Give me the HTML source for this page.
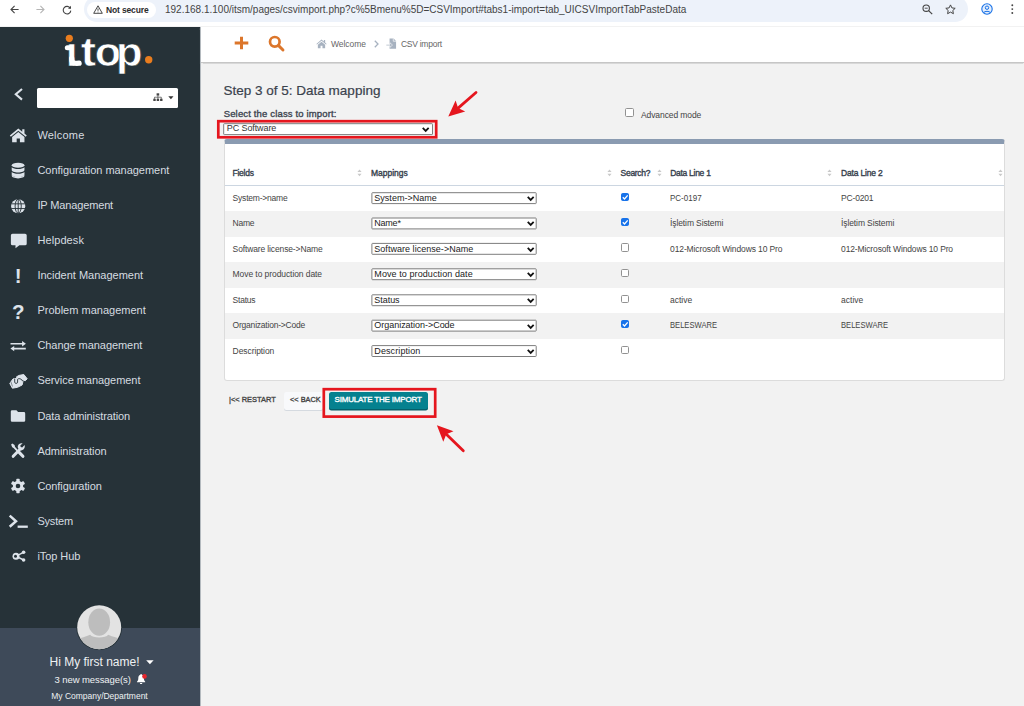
<!DOCTYPE html>
<html><head><meta charset="utf-8">
<style>
*{box-sizing:border-box;margin:0;padding:0}
html,body{width:1024px;height:706px;overflow:hidden;background:#f2f2f2;font-family:"Liberation Sans",sans-serif;}
.a{position:absolute;white-space:nowrap;font-family:"Liberation Sans",sans-serif}
.b{position:absolute}
#chrome{position:absolute;left:0;top:0;width:1024px;height:26px;background:#fff;}
#urlbar{position:absolute;left:84px;top:-4px;width:884px;height:25.5px;background:#edf2fa;border-radius:13px;}
#chip{position:absolute;left:87px;top:1.5px;width:68.5px;height:16px;background:#fff;border-radius:8px;}
#side{position:absolute;left:0;top:26.5px;width:200px;height:680px;background:#263238;}
#sidefoot{position:absolute;left:0;top:628px;width:200px;height:78px;background:#3e4a59;}
#topbar{position:absolute;left:200px;top:27px;width:824px;height:36px;background:#fff;border-bottom:1px solid #c6c6c6;box-shadow:0 0.5px 0.8px #d8d8d8}
#main{position:absolute;left:200px;top:63.5px;width:824px;height:644px;background:#f2f2f2;}
#edge{position:absolute;left:200px;top:26.5px;width:1px;height:680px;background:#b4babf}
#panel{position:absolute;left:223.5px;top:139.3px;width:781.5px;height:241.6px;background:#fff;border:1px solid #dcdcdc;border-top:5px solid #8a9bb1;border-radius:3px 3px 3px 3px;}
.row{position:absolute;left:224.7px;width:779px;background:#f2f2f2}
.sel{position:absolute;background:#fff;border:1px solid #808080;border-radius:1.5px}
.cb{position:absolute;width:8.4px;height:8.4px;border:1px solid #929292;border-radius:1.6px;background:#fff}
.cb.on{background:#1873ea;border-color:#1873ea}
svg{position:absolute;overflow:visible}
</style></head><body>
<div id="chrome">
  <div id="urlbar"></div><div id="chip"></div>
  <!-- back -->
  <svg style="left:10px;top:5px" width="9" height="9" viewBox="0 0 9 9"><path d="M8.6 4.5H1.2M4.6 0.9L1 4.5l3.6 3.6" fill="none" stroke="#444" stroke-width="1.1"/></svg>
  <svg style="left:36px;top:5px" width="9" height="9" viewBox="0 0 9 9"><path d="M0.4 4.5H7.8M4.4 0.9L8 4.5 4.4 8.1" fill="none" stroke="#b5b5b5" stroke-width="1.1"/></svg>
  <svg style="left:62px;top:4.5px" width="10" height="10" viewBox="0 0 10 10"><path d="M8.3 3.2A3.8 3.8 0 1 0 8.8 5.6" fill="none" stroke="#444" stroke-width="1.1"/><path d="M9 0.8v3H6z" fill="#444"/></svg>
  <!-- warning -->
  <svg style="left:93px;top:5px" width="10" height="9" viewBox="0 0 10 9"><path d="M5 0.8L9.3 8.3H0.7z" fill="none" stroke="#333" stroke-width="0.9" stroke-linejoin="round"/><path d="M5 3.4v2.4M5 6.6v0.8" stroke="#333" stroke-width="0.9"/></svg>
  <!-- zoom -->
  <svg style="left:921.5px;top:4px" width="11" height="11" viewBox="0 0 11 11"><circle cx="4.2" cy="4.2" r="3.2" fill="none" stroke="#444" stroke-width="1.1"/><path d="M6.6 6.6L10.2 10.2" stroke="#444" stroke-width="1.2"/><path d="M2.7 4.2h3" stroke="#444" stroke-width="0.9"/></svg>
  <!-- star -->
  <svg style="left:945px;top:4px" width="11" height="10.500" viewBox="0 0 11 10.5"><path d="M5.500 0.9L6.9 3.9 10.2 4.3 7.8 6.500 8.4 9.700 5.500 8.100 2.600 9.700 3.200 6.500 0.800 4.300 4.100 3.900z" fill="none" stroke="#444" stroke-width="1" stroke-linejoin="round"/></svg>
  <!-- profile -->
  <svg style="left:980.6px;top:3px" width="12" height="12" viewBox="0 0 12 12"><circle cx="6" cy="6" r="5.2" fill="#e4eefc" stroke="#1a73e8" stroke-width="1.1"/><circle cx="6" cy="4.700" r="1.7" fill="none" stroke="#1a73e8" stroke-width="1"/><path d="M2.700 9.600C3.400 7.900 8.600 7.900 9.300 9.600" fill="none" stroke="#1a73e8" stroke-width="1"/></svg>
  <svg style="left:1011px;top:4.3px" width="3" height="11" viewBox="0 0 3 11"><circle cx="1.3" cy="1.2" r="0.95" fill="#444"/><circle cx="1.3" cy="5.1" r="0.95" fill="#444"/><circle cx="1.3" cy="9" r="0.95" fill="#444"/></svg>
</div>
<div id="side"></div>
<div id="sidefoot"></div>
<div id="topbar"></div>
<div id="main"></div>
<div id="edge"></div>
<!-- logo -->
<svg style="left:0;top:0" width="200" height="90" viewBox="0 0 200 90">
  <g font-family="Liberation Sans, sans-serif" font-weight="bold" font-size="41" fill="#fff" stroke="#263238" stroke-width="0.6" stroke-linejoin="round" text-anchor="middle">
  <text transform="translate(71.6,66.2) scale(1.04,1)" x="0" y="0">ı</text>
  <text transform="translate(88.4,66.2) scale(1.12,1)" x="0" y="0">t</text>
  <text transform="translate(108,66.2) scale(1.06,1)" x="0" y="0">o</text>
  <text transform="translate(129.4,66.2) scale(1.06,1)" x="0" y="0">p</text>
  </g>
  <path d="M71.7 58.500c0 4.200 2 5.300 7.400 4.700" fill="none" stroke="#fff" stroke-width="5.3" stroke-linecap="round"/>
  <path d="M67.3 47.700h3" fill="none" stroke="#fff" stroke-width="5" stroke-linecap="round"/>
  <circle cx="69.3" cy="38.3" r="3.6" fill="#ea7d1e"/>
  <circle cx="148.7" cy="59.8" r="3.7" fill="#ea7d1e"/>
</svg>
<!-- collapse chevron -->
<svg style="left:14px;top:88px" width="10" height="13" viewBox="0 0 10 13"><path d="M8 1L1.800 6.300 8 11.600" fill="none" stroke="#dde3ea" stroke-width="2.100"/></svg>
<!-- search box -->
<div class="b" style="left:37px;top:88.400px;width:140.800px;height:19.200px;background:#fff;border-radius:1.500px"></div>
<svg style="left:152.500px;top:92.500px" width="10" height="9" viewBox="0 0 10 9"><g fill="#444"><rect x="3.600" y="0.300" width="2.600" height="2.300"/><rect x="0.300" y="5.700" width="2.400" height="2.300"/><rect x="3.700" y="5.700" width="2.400" height="2.300"/><rect x="7.100" y="5.700" width="2.400" height="2.300"/></g><path d="M4.900 2.500v3.300M1.500 5.800V4.200H8.300V5.800" fill="none" stroke="#444" stroke-width="0.700"/></svg>
<svg style="left:167.500px;top:95.500px" width="6" height="4" viewBox="0 0 6 4"><path d="M0.300 0.300H5.500L2.900 3.300z" fill="#333"/></svg>
<!-- menu icons : each 16x16 box at left 10, top cy-8 -->
<!-- home 135 -->
<svg style="left:9px;top:125.800px" width="18.600" height="18.200" viewBox="0 0 16 16" preserveAspectRatio="none"><path d="M8 2.300L0.700 8.400l0.900 1L8 4.100l6.400 5.300 0.900-1L13.300 6.700V2.900h-1.900v2.200z" fill="#dde3ea"/><path d="M8 5.200L2.700 9.600v4.800h3.900v-3.300h2.800v3.300h3.900V9.600z" fill="#dde3ea"/></svg>
<!-- database 170.3 -->
<svg style="left:10.200px;top:162.400px" width="16.200" height="17.600" viewBox="0 0 16 16" preserveAspectRatio="none"><g fill="#dde3ea"><ellipse cx="8" cy="3" rx="6.300" ry="2.300"/><path d="M1.700 4.700v2.600c0 1.300 2.800 2.300 6.300 2.300s6.300-1 6.300-2.300V4.700c-1.200 1-3.600 1.600-6.300 1.600S2.900 5.700 1.700 4.700z"/><path d="M1.700 9v2.600c0 1.300 2.800 2.300 6.300 2.300s6.300-1 6.300-2.300V9c-1.200 1-3.600 1.600-6.300 1.600S2.900 10 1.700 9z"/></g><path d="M1.700 13.300v0.500c0 1.300 2.800 2.300 6.300 2.300s6.300-1 6.300-2.300v-0.500c-1.200 1-3.600 1.600-6.300 1.600s-5.100-0.600-6.300-1.600z" fill="#dde3ea" transform="translate(0,-1.200)"/></svg>
<!-- globe 205.4 -->
<svg style="left:10.100px;top:197.700px" width="16.400" height="16.400" viewBox="0 0 16 16"><circle cx="8" cy="8" r="6.900" fill="#dde3ea"/><g fill="none" stroke="#263238" stroke-width="0.9"><ellipse cx="8" cy="8" rx="3" ry="6.900"/><path d="M1.100 5.700h13.800M1.100 10.300h13.800M8 1.100v13.800"/></g></svg>
<!-- comment 240.5 -->
<svg style="left:9.600px;top:231.900px" width="17.600" height="17.400" viewBox="0 0 16 16" preserveAspectRatio="none"><path d="M2.300 1.600h11.400a1.500 1.500 0 0 1 1.500 1.500v7.600a1.500 1.500 0 0 1-1.500 1.500H8.500L5 14.900v-2.700H2.300a1.500 1.500 0 0 1-1.500-1.500V3.100a1.500 1.500 0 0 1 1.500-1.500z" fill="#dde3ea"/></svg>
<!-- exclamation 275.5 -->
<div class="a" style="left:8px;top:264px;width:20.400px;text-align:center;font-size:20.500px;line-height:23px;font-weight:bold;color:#dde3ea">!</div>
<!-- question 310.7 -->
<div class="a" style="left:8px;top:300px;width:20.600px;text-align:center;font-size:20.500px;line-height:23px;font-weight:bold;color:#dde3ea">?</div>
<!-- exchange 345.7 -->
<svg style="left:0;top:0" width="40" height="400" viewBox="0 0 40 400"><g fill="#dde3ea"><path d="M10.500 343h11.600v-1.900l3.800 2.700-3.800 2.700v-1.900H10.500z"/><path d="M25.800 347.800H14.200v-1.900l-3.800 2.700 3.800 2.700v-1.900h11.600z"/></g></svg>
<!-- handshake 380.9 -->
<svg style="left:0;top:0" width="40" height="400" viewBox="0 0 40 400"><g fill="#dde3ea" stroke="#dde3ea" stroke-width="1" stroke-linejoin="round"><path d="M9.800 383.400L13 378.900 18.200 378.100 23 381.200 22.100 385 17.500 387.300 12.400 388.200z"/><path d="M16.200 377.200L18.600 375.500 23.800 374.500 27.200 378.800 25.200 380.800 21.700 379.400z"/></g><path d="M14.700 378.600V382.200c0 1.600 2.900 1.600 2.900 0V379.300c0.800-0.900 2.300-0.900 3.400 0l1.900 1.700" fill="none" stroke="#263238" stroke-width="0.900"/><path d="M10.900 381.900l1.600 4.600" stroke="#263238" stroke-width="0.500" fill="none"/></svg>
<!-- folder 416 -->
<svg style="left:10.200px;top:408.200px" width="16" height="16" viewBox="0 0 16 16"><path d="M2.100 2.300h4.300l1.700 1.800h5.800a1.300 1.300 0 0 1 1.300 1.300v7.100a1.300 1.300 0 0 1-1.300 1.300H2.100a1.300 1.300 0 0 1-1.300-1.300V3.600a1.300 1.300 0 0 1 1.300-1.300z" fill="#dde3ea"/></svg>
<!-- tools 451.2 -->
<svg style="left:10px;top:443.200px" width="16" height="16" viewBox="0 0 16 16"><g stroke="#dde3ea" fill="none" stroke-linecap="round"><path d="M3.200 13.300L9.300 7" stroke-width="3"/><path d="M6.800 7.200L3 3.200" stroke-width="1.800"/><path d="M9.400 9.600l3.500 3.700" stroke-width="3.100"/></g><path d="M1.100 1.600l1.200-1 2.300 1.500 0.300 1.600-1.200 1-1.500-0.500z" fill="#dde3ea"/><path d="M14.600 2.100l-2.400 2.300-1.500-0.400-0.400-1.500L12.700 0.300C11.200-0.100 9.700 0.300 8.800 1.300c-1 1.100-1.300 2.500-0.800 3.900l1.700 1.900c1.400 0.600 2.900 0.300 4-0.800 1-1 1.400-2.600 0.900-4.200z" fill="#dde3ea"/></svg>
<!-- cog 486.300 -->
<svg style="left:10px;top:478.300px" width="16" height="16" viewBox="0 0 16 16"><g transform="translate(8,8)"><circle r="5.200" fill="#dde3ea"/><g fill="#dde3ea"><rect x="-1.700" y="-7.200" width="3.400" height="14.400" rx="0.700"/><rect x="-1.700" y="-7.200" width="3.400" height="14.400" rx="0.700" transform="rotate(60)"/><rect x="-1.700" y="-7.200" width="3.400" height="14.400" rx="0.700" transform="rotate(120)"/></g><circle r="2.300" fill="#263238"/></g></svg>
<!-- terminal 521.4 -->
<svg style="left:8px;top:513.400px" width="20" height="16" viewBox="0 0 20 16"><path d="M1.700 2.600L8 8.200 1.700 13.800" fill="none" stroke="#dde3ea" stroke-width="2.500" stroke-linejoin="miter"/><path d="M9.600 13.700h10.200" stroke="#dde3ea" stroke-width="2.300"/></svg>
<!-- hub 556.6 -->
<svg style="left:10.500px;top:547.600px" width="16" height="16" viewBox="0 0 16 16"><g fill="#dde3ea"><circle cx="5" cy="8.200" r="3.500"/><circle cx="12.600" cy="4.300" r="1.800"/><circle cx="12.600" cy="12" r="1.800"/></g><path d="M5 8.200L12.600 4.300M5 8.200l7.600 3.800" stroke="#dde3ea" stroke-width="1.400" fill="none"/><circle cx="4.500" cy="8.200" r="1.500" fill="#263238"/></svg>
<!-- avatar -->
<svg style="left:76.300px;top:604px" width="46.400" height="46.400" viewBox="0 0 46 46"><defs><clipPath id="av"><circle cx="23" cy="23" r="21.800"/></clipPath></defs><circle cx="23" cy="23" r="22.700" fill="#263238"/><circle cx="23" cy="23" r="21.800" fill="#e3e3e3"/><g clip-path="url(#av)" fill="#bdbdbd"><ellipse cx="23" cy="18" rx="10.800" ry="13.600"/><path d="M-2 46V39c0-5 10-5.500 16-8.500 2.500 3.500 15.500 3.500 18 0 6 3 16 3.500 16 8.500v7z"/></g></svg>
<!-- caret -->
<svg style="left:146px;top:659.800px" width="8" height="5" viewBox="0 0 8 5"><path d="M0.200 0.300H7.600L3.900 4.300z" fill="#fff"/></svg>
<!-- bell -->
<svg style="left:135.500px;top:673.500px" width="11" height="11" viewBox="0 0 11 11"><path d="M4.300 0.800a0.800 0.800 0 0 1 1.600 0C7.300 1.300 7.900 2.700 7.900 4.300c0 2 0.600 2.700 1.300 3.400v0.600H1v-0.600C1.700 7 2.300 6.300 2.300 4.300 2.300 2.700 2.900 1.300 4.300 0.800z" fill="#fff"/><path d="M3.900 8.900h2.400a1.200 1.200 0 0 1-2.400 0z" fill="#fff"/><circle cx="8.500" cy="2.400" r="2.300" fill="#e8262d"/></svg>

<svg style="left:233.600px;top:36.300px" width="15" height="14" viewBox="0 0 15 14"><path d="M7.500 0.700v12.600M0.700 7h13.600" stroke="#dc762b" stroke-width="3" fill="none"/></svg>
<svg style="left:267.700px;top:34.600px" width="17" height="17" viewBox="0 0 17 17"><circle cx="6.800" cy="6.800" r="4.800" fill="none" stroke="#dc762b" stroke-width="2.700"/><path d="M10.600 10.600L15 15" stroke="#dc762b" stroke-width="2.900" stroke-linecap="round"/></svg>
<svg style="left:315.500px;top:38.800px" width="11" height="10" viewBox="0 0 16 14.500"><path d="M8 0.800L0.500 7.100l0.900 1L8 2.600l6.600 5.500 0.900-1L13.300 5.200V1.400h-1.900v2.200z" fill="#a7b2c0"/><path d="M8 3.800L2.700 8.200v5.300h3.900v-3.600h2.800v3.600h3.900V8.200z" fill="#a7b2c0"/></svg>
<svg style="left:374.300px;top:39.800px" width="5" height="8" viewBox="0 0 5 8"><path d="M0.800 0.700L4 4 0.800 7.300" fill="none" stroke="#a7b2c0" stroke-width="1.300"/></svg>
<svg style="left:386.300px;top:38.200px" width="11.200" height="11.200" viewBox="0 0 10 10"><path d="M3.200 0.400h3.600L9 2.600v7H3.200z" fill="#a7b2c0"/><path d="M6.500 0.400v2.500H9" fill="none" stroke="#fff" stroke-width="0.600"/><path d="M0.200 5.700h3.400V4.300l2.200 2-2.200 2V6.900H0.200z" fill="#a7b2c0" stroke="#fff" stroke-width="0.500"/></svg>
<div class="cb" style="left:624.800px;top:107.800px;width:9px;height:9px"></div>
<div id="panel"></div>
<div class="b" style="left:224.700px;top:185px;width:779px;height:1px;background:#ccd6e1"></div>
<div class="row" style="top:211.0px;height:26.0px"></div>
<div class="row" style="top:262.0px;height:26.0px"></div>
<div class="row" style="top:313.0px;height:26.0px"></div>
<svg style="left:0;top:0" width="1024" height="706"><rect x="223.7" y="123.7" width="208.8" height="10.9" rx="0.6" fill="#fff" stroke="#7d7d7d" stroke-width="1"/></svg>
<svg style="left:421.900px;top:126.700px" width="7.4" height="5.6" viewBox="0 0 8 6"><path d="M0.800 0.900L4 4.200 7.200 0.900" fill="none" stroke="#111" stroke-width="1.900"/></svg>
<svg style="left:0;top:0" width="1024" height="706"><rect x="218.3" y="121.2" width="217.9" height="16.1" fill="none" stroke="#e5161e" stroke-width="2.7"/></svg>
<svg style="left:0;top:0" width="1024" height="706"><rect x="371.9" y="192.70" width="164.3" height="10.9" rx="0.6" fill="#fff" stroke="#7d7d7d" stroke-width="1"/></svg>
<svg style="left:526.600px;top:196.0px" width="7.4" height="5.6" viewBox="0 0 8 6"><path d="M0.800 0.900L4 4.200 7.200 0.900" fill="none" stroke="#111" stroke-width="1.900"/></svg>
<div class="cb on" style="left:621px;top:192.6px"></div>
<svg style="left:621px;top:192.6px" width="8.400" height="8.400" viewBox="0 0 8.400 8.400"><path d="M1.800 4.300L3.500 6 6.700 2.400" fill="none" stroke="#fff" stroke-width="1.300"/></svg>
<svg style="left:0;top:0" width="1024" height="706"><rect x="371.9" y="218.00" width="164.3" height="10.9" rx="0.6" fill="#fff" stroke="#7d7d7d" stroke-width="1"/></svg>
<svg style="left:526.600px;top:221.3px" width="7.4" height="5.6" viewBox="0 0 8 6"><path d="M0.800 0.900L4 4.200 7.200 0.900" fill="none" stroke="#111" stroke-width="1.900"/></svg>
<div class="cb on" style="left:621px;top:217.9px"></div>
<svg style="left:621px;top:217.9px" width="8.400" height="8.400" viewBox="0 0 8.400 8.400"><path d="M1.800 4.300L3.500 6 6.700 2.400" fill="none" stroke="#fff" stroke-width="1.300"/></svg>
<svg style="left:0;top:0" width="1024" height="706"><rect x="371.9" y="243.40" width="164.3" height="10.9" rx="0.6" fill="#fff" stroke="#7d7d7d" stroke-width="1"/></svg>
<svg style="left:526.600px;top:246.7px" width="7.4" height="5.6" viewBox="0 0 8 6"><path d="M0.800 0.900L4 4.200 7.200 0.900" fill="none" stroke="#111" stroke-width="1.900"/></svg>
<div class="cb" style="left:621px;top:243.3px"></div>
<svg style="left:0;top:0" width="1024" height="706"><rect x="371.9" y="268.80" width="164.3" height="10.9" rx="0.6" fill="#fff" stroke="#7d7d7d" stroke-width="1"/></svg>
<svg style="left:526.600px;top:272.1px" width="7.4" height="5.6" viewBox="0 0 8 6"><path d="M0.800 0.900L4 4.200 7.200 0.900" fill="none" stroke="#111" stroke-width="1.900"/></svg>
<div class="cb" style="left:621px;top:268.7px"></div>
<svg style="left:0;top:0" width="1024" height="706"><rect x="371.9" y="294.80" width="164.3" height="10.9" rx="0.6" fill="#fff" stroke="#7d7d7d" stroke-width="1"/></svg>
<svg style="left:526.600px;top:298.1px" width="7.4" height="5.6" viewBox="0 0 8 6"><path d="M0.800 0.900L4 4.200 7.200 0.900" fill="none" stroke="#111" stroke-width="1.900"/></svg>
<div class="cb" style="left:621px;top:294.7px"></div>
<svg style="left:0;top:0" width="1024" height="706"><rect x="371.9" y="320.20" width="164.3" height="10.9" rx="0.6" fill="#fff" stroke="#7d7d7d" stroke-width="1"/></svg>
<svg style="left:526.600px;top:323.5px" width="7.4" height="5.6" viewBox="0 0 8 6"><path d="M0.800 0.900L4 4.200 7.200 0.900" fill="none" stroke="#111" stroke-width="1.900"/></svg>
<div class="cb on" style="left:621px;top:320.1px"></div>
<svg style="left:621px;top:320.1px" width="8.400" height="8.400" viewBox="0 0 8.400 8.400"><path d="M1.800 4.300L3.500 6 6.700 2.400" fill="none" stroke="#fff" stroke-width="1.300"/></svg>
<svg style="left:0;top:0" width="1024" height="706"><rect x="371.9" y="345.60" width="164.3" height="10.9" rx="0.6" fill="#fff" stroke="#7d7d7d" stroke-width="1"/></svg>
<svg style="left:526.600px;top:348.9px" width="7.4" height="5.6" viewBox="0 0 8 6"><path d="M0.800 0.900L4 4.200 7.200 0.900" fill="none" stroke="#111" stroke-width="1.900"/></svg>
<div class="cb" style="left:621px;top:345.5px"></div>
<svg style="left:356.8px;top:168.800px" width="5" height="8" viewBox="0 0 5 8"><path d="M0.400 3.100L2.500 0.500 4.600 3.100zM0.400 4.700L2.500 7.300 4.600 4.700z" fill="#c9c9c9"/></svg>
<svg style="left:606.5px;top:168.800px" width="5" height="8" viewBox="0 0 5 8"><path d="M0.400 3.100L2.500 0.500 4.600 3.100zM0.400 4.700L2.500 7.300 4.600 4.700z" fill="#c9c9c9"/></svg>
<svg style="left:656.5px;top:168.800px" width="5" height="8" viewBox="0 0 5 8"><path d="M0.400 3.100L2.500 0.500 4.600 3.100zM0.400 4.700L2.500 7.300 4.600 4.700z" fill="#c9c9c9"/></svg>
<svg style="left:827.0px;top:168.800px" width="5" height="8" viewBox="0 0 5 8"><path d="M0.400 3.100L2.500 0.500 4.600 3.100zM0.400 4.700L2.500 7.300 4.600 4.700z" fill="#c9c9c9"/></svg>
<svg style="left:997.5px;top:168.800px" width="5" height="8" viewBox="0 0 5 8"><path d="M0.400 3.100L2.500 0.500 4.600 3.100zM0.400 4.700L2.500 7.300 4.600 4.700z" fill="#c9c9c9"/></svg>
<div class="b" style="left:283.900px;top:392px;width:39px;height:17.6px;background:#f8f9fb;border-radius:2.500px;box-shadow:0 1px 0 #d5dae0"></div>
<div class="b" style="left:329px;top:392px;width:98.500px;height:17.4px;background:#05818f;border-radius:2.500px;box-shadow:0 1.500px 0 #055f69"></div>
<svg style="left:0;top:0" width="1024" height="706"><rect x="323.8" y="389.2" width="111.4" height="27.4" fill="none" stroke="#e5161e" stroke-width="2.7"/></svg>
<svg style="left:0;top:0" width="1024" height="706"><path d="M476.0 92.5L458.1 108.1" stroke="#e5161e" stroke-width="2.8" stroke-linecap="round"/><path d="M448.3 116.6L455.6 100.6L458.1 108.1L465.2 111.6z" fill="#e5161e"/></svg>
<svg style="left:0;top:0" width="1024" height="706"><path d="M463.3 450.8L446.3 434.3" stroke="#e5161e" stroke-width="2.8" stroke-linecap="round"/><path d="M436.9 425.3L453.5 431.2L446.3 434.3L443.3 441.7z" fill="#e5161e"/></svg>
<div class="a" style="left:37.4px;top:128.5px;font-size:11px;line-height:13px;color:#d6dce0;letter-spacing:0.207px;">Welcome</div>
<div class="a" style="left:37.4px;top:163.8px;font-size:11px;line-height:13px;color:#d6dce0;letter-spacing:-0.035px;">Configuration management</div>
<div class="a" style="left:37.4px;top:198.9px;font-size:11px;line-height:13px;color:#d6dce0;letter-spacing:-0.139px;">IP Management</div>
<div class="a" style="left:37.4px;top:234.0px;font-size:11px;line-height:13px;color:#d6dce0;letter-spacing:0.092px;">Helpdesk</div>
<div class="a" style="left:37.4px;top:269.0px;font-size:11px;line-height:13px;color:#d6dce0;letter-spacing:-0.005px;">Incident Management</div>
<div class="a" style="left:37.4px;top:304.2px;font-size:11px;line-height:13px;color:#d6dce0;letter-spacing:0.010px;">Problem management</div>
<div class="a" style="left:37.4px;top:339.2px;font-size:11px;line-height:13px;color:#d6dce0;letter-spacing:-0.056px;">Change management</div>
<div class="a" style="left:37.4px;top:374.4px;font-size:11px;line-height:13px;color:#d6dce0;letter-spacing:-0.050px;">Service management</div>
<div class="a" style="left:37.4px;top:409.5px;font-size:11px;line-height:13px;color:#d6dce0;letter-spacing:-0.110px;">Data administration</div>
<div class="a" style="left:37.4px;top:444.7px;font-size:11px;line-height:13px;color:#d6dce0;letter-spacing:-0.031px;">Administration</div>
<div class="a" style="left:37.4px;top:479.8px;font-size:11px;line-height:13px;color:#d6dce0;letter-spacing:-0.078px;">Configuration</div>
<div class="a" style="left:37.4px;top:514.9px;font-size:11px;line-height:13px;color:#d6dce0;letter-spacing:-0.177px;">System</div>
<div class="a" style="left:37.4px;top:550.1px;font-size:11px;line-height:13px;color:#d6dce0;letter-spacing:-0.060px;">iTop Hub</div>
<div class="a" style="left:49.5px;top:654.8px;font-size:12px;line-height:14px;color:#eef1f3;letter-spacing:-0.001px;">Hi My first name!</div>
<div class="a" style="left:54.5px;top:674.1px;font-size:9.5px;line-height:11px;color:#eef1f3;letter-spacing:-0.082px;">3 new message(s)</div>
<div class="a" style="left:51.3px;top:690.6px;font-size:8.5px;line-height:10px;color:#eef1f3;letter-spacing:-0.022px;">My Company/Department</div>
<div class="a" style="left:105.9px;top:4.9px;font-size:8.5px;line-height:10px;font-weight:bold;color:#2b2b2b;letter-spacing:-0.126px;">Not secure</div>
<div class="a" style="left:165.0px;top:4.4px;font-size:10px;line-height:12px;color:#444;letter-spacing:-0.001px;">192.168.1.100/itsm/pages/csvimport.php?c%5Bmenu%5D=CSVImport#tabs1-import=tab_UICSVImportTabPasteData</div>
<div class="a" style="left:331.0px;top:38.7px;font-size:8.5px;line-height:10px;color:#666;letter-spacing:-0.064px;">Welcome</div>
<div class="a" style="left:400.9px;top:38.7px;font-size:8.5px;line-height:10px;color:#666;letter-spacing:-0.252px;">CSV import</div>
<div class="a" style="left:223.6px;top:82.7px;font-size:13.5px;line-height:16px;color:#3a424d;letter-spacing:-0.002px;-webkit-text-stroke:0.2px;">Step 3 of 5: Data mapping</div>
<div class="a" style="left:223.7px;top:107.6px;font-size:9.5px;line-height:11px;-webkit-text-stroke:0.35px;color:#3d4550;letter-spacing:0.155px;">Select the class to import:</div>
<div class="a" style="left:641.0px;top:110.0px;font-size:8.5px;line-height:10px;color:#444;letter-spacing:-0.095px;">Advanced mode</div>
<div class="a" style="left:226.8px;top:122.7px;font-size:9px;line-height:11px;color:#333;letter-spacing:-0.103px;">PC Software</div>
<div class="a" style="left:232.4px;top:168.0px;font-size:8.5px;line-height:10px;-webkit-text-stroke:0.35px;color:#36404c;letter-spacing:-0.197px;">Fields</div>
<div class="a" style="left:371.0px;top:168.0px;font-size:8.5px;line-height:10px;-webkit-text-stroke:0.35px;color:#36404c;letter-spacing:-0.023px;">Mappings</div>
<div class="a" style="left:620.6px;top:168.0px;font-size:8.5px;line-height:10px;-webkit-text-stroke:0.35px;color:#36404c;letter-spacing:-0.295px;">Search?</div>
<div class="a" style="left:670.2px;top:168.0px;font-size:8.5px;line-height:10px;-webkit-text-stroke:0.35px;color:#36404c;letter-spacing:-0.278px;">Data Line 1</div>
<div class="a" style="left:841.1px;top:168.0px;font-size:8.5px;line-height:10px;-webkit-text-stroke:0.35px;color:#36404c;letter-spacing:-0.178px;">Data Line 2</div>
<div class="a" style="left:232.6px;top:192.9px;font-size:8.5px;line-height:10px;color:#444;letter-spacing:-0.210px;">System-&gt;name</div>
<div class="a" style="left:374.3px;top:192.6px;font-size:9px;line-height:11px;color:#222;letter-spacing:0.020px;">System-&gt;Name</div>
<div class="a" style="left:670.1px;top:192.9px;font-size:8.5px;line-height:10px;color:#444;letter-spacing:0.000px;transform:scaleX(0.9415);transform-origin:0 50%;">PC-0197</div>
<div class="a" style="left:841.1px;top:192.9px;font-size:8.5px;line-height:10px;color:#444;letter-spacing:-0.177px;">PC-0201</div>
<div class="a" style="left:232.6px;top:218.2px;font-size:8.5px;line-height:10px;color:#444;letter-spacing:-0.229px;">Name</div>
<div class="a" style="left:374.3px;top:217.9px;font-size:9px;line-height:11px;color:#222;letter-spacing:-0.229px;">Name*</div>
<div class="a" style="left:670.1px;top:218.2px;font-size:8.5px;line-height:10px;color:#444;letter-spacing:-0.114px;">İşletim Sistemi</div>
<div class="a" style="left:841.1px;top:218.2px;font-size:8.5px;line-height:10px;color:#444;letter-spacing:-0.114px;">İşletim Sistemi</div>
<div class="a" style="left:232.6px;top:243.6px;font-size:8.5px;line-height:10px;color:#444;letter-spacing:-0.131px;">Software license-&gt;Name</div>
<div class="a" style="left:374.3px;top:244.0px;font-size:9px;line-height:11px;color:#222;letter-spacing:0.033px;">Software license-&gt;Name</div>
<div class="a" style="left:670.1px;top:243.6px;font-size:8.5px;line-height:10px;color:#444;letter-spacing:-0.124px;">012-Microsoft Windows 10 Pro</div>
<div class="a" style="left:841.1px;top:243.6px;font-size:8.5px;line-height:10px;color:#444;letter-spacing:-0.139px;">012-Microsoft Windows 10 Pro</div>
<div class="a" style="left:232.6px;top:269.0px;font-size:8.5px;line-height:10px;color:#444;letter-spacing:-0.077px;">Move to production date</div>
<div class="a" style="left:374.3px;top:268.7px;font-size:9px;line-height:11px;color:#222;letter-spacing:0.084px;">Move to production date</div>
<div class="a" style="left:232.6px;top:295.0px;font-size:8.5px;line-height:10px;color:#444;letter-spacing:-0.222px;">Status</div>
<div class="a" style="left:374.3px;top:294.7px;font-size:9px;line-height:11px;color:#222;letter-spacing:-0.043px;">Status</div>
<div class="a" style="left:670.1px;top:295.0px;font-size:8.5px;line-height:10px;color:#444;letter-spacing:-0.024px;">active</div>
<div class="a" style="left:841.1px;top:295.0px;font-size:8.5px;line-height:10px;color:#444;letter-spacing:-0.004px;">active</div>
<div class="a" style="left:232.6px;top:320.4px;font-size:8.5px;line-height:10px;color:#444;letter-spacing:-0.218px;">Organization-&gt;Code</div>
<div class="a" style="left:374.3px;top:320.1px;font-size:9px;line-height:11px;color:#222;letter-spacing:-0.030px;">Organization-&gt;Code</div>
<div class="a" style="left:670.1px;top:320.4px;font-size:8.5px;line-height:10px;color:#444;letter-spacing:0.000px;transform:scaleX(0.8936);transform-origin:0 50%;">BELESWARE</div>
<div class="a" style="left:841.1px;top:320.4px;font-size:8.5px;line-height:10px;color:#444;letter-spacing:0.000px;transform:scaleX(0.8936);transform-origin:0 50%;">BELESWARE</div>
<div class="a" style="left:232.6px;top:345.8px;font-size:8.5px;line-height:10px;color:#444;letter-spacing:-0.083px;">Description</div>
<div class="a" style="left:374.3px;top:345.5px;font-size:9px;line-height:11px;color:#222;letter-spacing:0.097px;">Description</div>
<div class="a" style="left:229.2px;top:395.0px;font-size:8px;line-height:10px;-webkit-text-stroke:0.35px;color:#444;letter-spacing:0.000px;transform:scaleX(0.9313);transform-origin:0 50%;">|&lt;&lt; RESTART</div>
<div class="a" style="left:289.9px;top:395.0px;font-size:8px;line-height:10px;-webkit-text-stroke:0.35px;color:#444;letter-spacing:0.000px;transform:scaleX(0.9203);transform-origin:0 50%;">&lt;&lt; BACK</div>
<div class="a" style="left:334.5px;top:395.0px;font-size:8px;line-height:10px;-webkit-text-stroke:0.35px;color:#fff;letter-spacing:-0.188px;">SIMULATE THE IMPORT</div>
</body></html>
